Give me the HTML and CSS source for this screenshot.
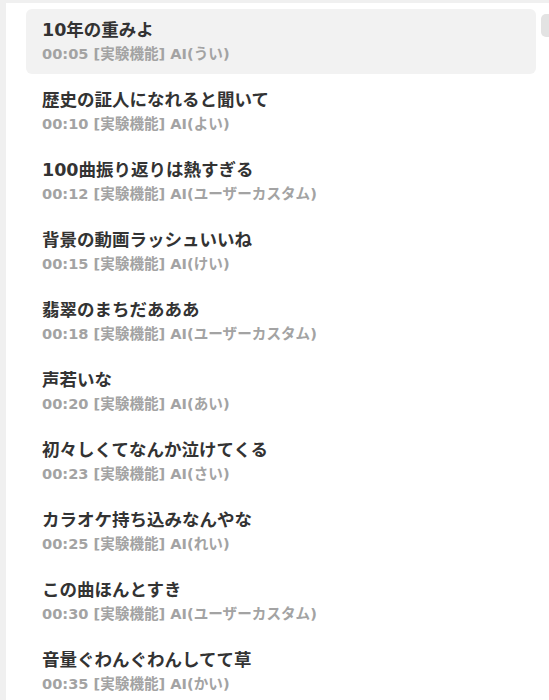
FILE: index.html
```html
<!DOCTYPE html>
<html lang="ja">
<head>
    <meta name="viewport" content="width=device-width, initial-scale=1">
    <title>コメント一覧</title>
    <link rel="stylesheet" href="styles.css">
</head>
<body>

    <div class="page">
        <div class="side-strip"></div>

        <div class="panel">
            <ul class="comment-list">
                <li class="comment active">
                    <div class="comment-text">10年の重みよ</div>
                    <div class="comment-meta">00:05 [実験機能] AI(うい)</div>
                </li>
                <li class="comment">
                    <div class="comment-text">歴史の証人になれると聞いて</div>
                    <div class="comment-meta">00:10 [実験機能] AI(よい)</div>
                </li>
                <li class="comment">
                    <div class="comment-text">100曲振り返りは熱すぎる</div>
                    <div class="comment-meta">00:12 [実験機能] AI(ユーザーカスタム)</div>
                </li>
                <li class="comment">
                    <div class="comment-text">背景の動画ラッシュいいね</div>
                    <div class="comment-meta">00:15 [実験機能] AI(けい)</div>
                </li>
                <li class="comment">
                    <div class="comment-text">翡翠のまちだあああ</div>
                    <div class="comment-meta">00:18 [実験機能] AI(ユーザーカスタム)</div>
                </li>
                <li class="comment">
                    <div class="comment-text">声若いな</div>
                    <div class="comment-meta">00:20 [実験機能] AI(あい)</div>
                </li>
                <li class="comment">
                    <div class="comment-text">初々しくてなんか泣けてくる</div>
                    <div class="comment-meta">00:23 [実験機能] AI(さい)</div>
                </li>
                <li class="comment">
                    <div class="comment-text">カラオケ持ち込みなんやな</div>
                    <div class="comment-meta">00:25 [実験機能] AI(れい)</div>
                </li>
                <li class="comment">
                    <div class="comment-text">この曲ほんとすき</div>
                    <div class="comment-meta">00:30 [実験機能] AI(ユーザーカスタム)</div>
                </li>
                <li class="comment">
                    <div class="comment-text">音量ぐわんぐわんしてて草</div>
                    <div class="comment-meta">00:35 [実験機能] AI(かい)</div>
                </li>
            </ul>

            <!-- scrollbar thumb -->
            <div class="scroll-thumb"></div>
        </div>
    </div>

</body>
</html>
```

FILE: styles.css
```css
/* General */
body {
    margin: 0;
    padding: 0;
    background-color: #ffffff;
    font-family: "DejaVu Sans", "Noto Sans CJK JP", sans-serif;
    overflow: hidden;
}

.page {
    display: flex;
    height: 700px;
}

.side-strip {
    width: 6px;
    flex-shrink: 0;
    background-color: #f0f0f0;
}

/* Panel */
.panel {
    position: relative;
    flex: 1;
    border-top: 3px solid #f0f0f0;
    padding: 6px 13px 0 20px;
}

.comment-list {
    list-style: none;
    margin: 0;
    padding: 0;
}

.comment {
    height: 65px;
    box-sizing: border-box;
    padding: 10px 16px;
    margin-bottom: 5px;
    border-radius: 6px;
}

.comment.active { background-color: #f2f2f2; }

.comment-text {
    font-size: 17.5px;
    line-height: 23px;
    font-weight: bold;
    color: #333333;
    white-space: nowrap;
}

.comment-meta {
    font-size: 14.6px;
    line-height: 23px;
    font-weight: bold;
    color: #a3a3a3;
    white-space: nowrap;
}

/* Scrollbar */
.scroll-thumb {
    position: absolute;
    top: 11px;
    right: -4px;
    width: 12px;
    height: 23px;
    border-radius: 5px;
    background-color: #e3e3e3;
}
```
